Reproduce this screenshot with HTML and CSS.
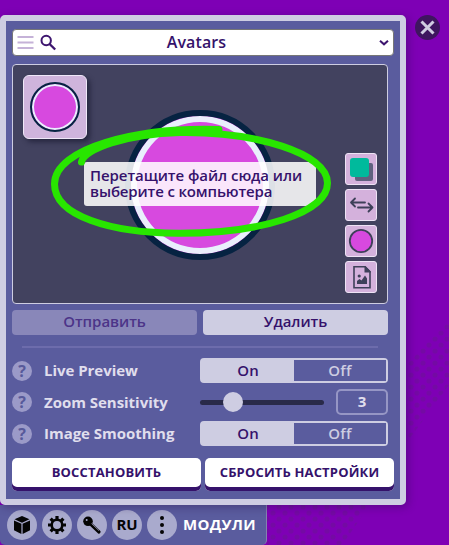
FILE: index.html
```html
<!DOCTYPE html>
<html lang="ru">
<head>
<meta charset="utf-8">
<title>Avatars</title>
<link rel="stylesheet" href="styles.css">
</head>
<body>
<svg class="texture" width="449" height="545" aria-hidden="true">
  <defs><pattern id="dots" width="12" height="12" patternUnits="userSpaceOnUse"><circle cx="3" cy="3" r="2.6"/><circle cx="9" cy="9" r="2.6"/></pattern></defs>
  <path d="M449 318L449 385L407 442V365Z" fill="url(#dots)"/>
  <path d="M267 505H370L342 545H267Z" fill="url(#dots)"/>
</svg>
<div class="workspace">
  <main class="panel">
    <div class="select">
      <svg width="50" height="25" viewBox="0 0 50 25"><path d="M4.500 7h16M4.500 12.500h16M4.500 18h16" stroke="#c5b2d8" stroke-width="2.2"/><circle cx="33.2" cy="10.5" r="4.7" fill="none" stroke="#3d156f" stroke-width="2"/><path d="M36.6 14l5.6 5.5" stroke="#3d156f" stroke-width="2.4"/></svg>
      <span class="select-text">Avatars</span>
      <svg class="chevron" width="10" height="8" viewBox="0 0 10 8"><path d="M1 1.7l4 3.6 4-3.6" fill="none" stroke="#3d156f" stroke-width="2"/></svg>
    </div>
    <section class="preview">
      <div class="thumb"><i class="disc small"></i></div>
      <i class="disc large"></i>
      <div class="hint"><div class="t-hint1">Перетащите файл сюда или</div><div class="t-hint2">выберите с компьютера</div></div>
      <div class="tools">
        <button><svg viewBox="0 0 30 30"><rect x="9" y="9" width="18" height="18" rx="2" fill="#60617f"/><rect x="4" y="4" width="19" height="19" rx="3" fill="#00ba9c"/></svg></button>
        <button><svg viewBox="0 0 30 30"><path d="M5 12.500h14M9 8.500l-4 4 4 4M12 17.500h14.500M22.500 13.500l4 4-4 4" fill="none" stroke="#3e4059" stroke-width="1.8" stroke-linecap="round" stroke-linejoin="round"/></svg></button>
        <button><svg viewBox="0 0 30 30"><circle cx="15" cy="15" r="11.2" fill="#d749df" stroke="#3e4059" stroke-width="1.8"/></svg></button>
        <button><svg viewBox="0 0 30 30"><path d="M8 4.800h11l5 5v16H8Z" fill="none" stroke="#3e4059" stroke-width="1.6"/><path d="M18.500 4h1l5.300 5.500v1h-6.300ZM11 22v-3l2.500-2 2 1.500 3.500-5 2 3V22Z" fill="#3e4059"/><circle cx="13.2" cy="14" r="1.6" fill="#3e4059"/></svg></button>
      </div>
      <svg class="scribble" width="290" height="120" viewBox="46 121 290 120"><path d="M219 129.500C137 127 54.500 148 54.500 184C54.500 216 111 233 178 233.200C260 233.500 327.500 213 327.500 183C327.500 153 255 131.500 180 132.500C126 134 84 149 81.500 162" fill="none" stroke="#28e600" stroke-width="7" stroke-linecap="round"/></svg>
    </section>
    <div class="actions"><button class="btn disabled"><span class="t-send">Отправить</span></button><button class="btn"><span class="t-del">Удалить</span></button></div>
    <hr>
    <div class="settings">
      <div class="row"><i class="help">?</i><label class="t-live">Live Preview</label><div class="toggle"><span>On</span><span class="off">Off</span></div></div>
      <div class="row"><i class="help">?</i><label class="t-zoom">Zoom Sensitivity</label><div class="range"><div class="track"><i class="knob"></i></div><span class="value">3</span></div></div>
      <div class="row"><i class="help">?</i><label class="t-image">Image Smoothing</label><div class="toggle"><span>On</span><span class="off">Off</span></div></div>
    </div>
    <div class="footer"><button><span class="t-restore">ВОССТАНОВИТЬ</span></button><button><span class="t-reset">СБРОСИТЬ НАСТРОЙКИ</span></button></div>
  </main>
  <button class="close"><svg width="25" height="25" viewBox="0 0 25 25"><path d="M6.500 6.500l12 12M18.500 6.500l-12 12" stroke="#d0cde2" stroke-width="3"/></svg></button>
</div>
<nav class="dock">
  <i><svg viewBox="0 0 30 30"><path d="M15 6l7.500 3.300L15 12.700 7.500 9.300ZM7 10.400l7.400 3.300v10.300L7 20.200ZM23 10.400l-7.400 3.300v10.300l7.400-3.800Z"/></svg></i>
  <i><svg viewBox="0 0 30 30"><circle cx="15" cy="15" r="5.300" fill="none" stroke="#050505" stroke-width="2.600"/><g stroke="#050505" stroke-width="3.200"><path d="M15 6v3.500M15 20.500V24M6 15h3.500M20.500 15H24M8.600 8.600l2.500 2.500M18.900 18.900l2.500 2.500M21.400 8.600l-2.500 2.500M11.100 18.900l-2.500 2.500"/></g></svg></i>
  <i><svg viewBox="0 0 30 30"><circle cx="11" cy="11.300" r="4.800"/><path d="M13 13.500l9 8.500" stroke="#050505" stroke-width="3.200" stroke-linecap="round"/><path d="M14.500 13.500l7.500 7.200" stroke="#a9aacd" stroke-width=".7"/><circle cx="9.700" cy="10" r="1" fill="#a9aacd"/></svg></i>
  <i class="lang"><span class="t-ru">RU</span></i>
  <i><svg viewBox="0 0 30 30"><circle cx="15" cy="8" r="2"/><circle cx="15" cy="15" r="2"/><circle cx="15" cy="22" r="2"/></svg></i>
  <strong class="t-mod">МОДУЛИ</strong>
</nav>
</body>
</html>
```
FILE: styles.css
```css
* { box-sizing: border-box; }
body { margin: 0; width: 449px; height: 545px; overflow: hidden; background: #7e00b5; font-family: "Open Sans", "Noto Sans", sans-serif; font-size: 16px; font-weight: 600; color: #35126b; padding-top: 15px; }
button { font: inherit; color: inherit; border: 0; padding: 0; }
svg { display: block; flex: none; }
span, label, .hint div { white-space: nowrap; }
.texture { position: absolute; inset: 0; fill: #740aa4; }
.workspace { display: flex; gap: 9px; align-items: flex-start; position: relative; z-index: 1; width: 449px; }
.panel { width: 406px; height: 490px; flex: none; border: 6px solid #cecde2; border-radius: 5px; background: #5a5c9e; padding: 8px 6px 0; box-shadow: 2px 2px 8px #28104866; }
.select { width: 382px; height: 27px; display: flex; align-items: center; background: #fff; border: 1px solid #777; border-radius: 4px; }
.select-text { flex: 1; text-align: center; padding-right: 49px; line-height: 25px; letter-spacing: .1px; }
.chevron { margin-right: 4px; }
.preview { margin-top: 8px; width: 376px; height: 240px; border: 1px solid #cecde2; border-radius: 4px; background: #42425f; position: relative; }
.thumb { position: absolute; left: 10px; top: 10px; width: 64px; height: 64px; border: 1px solid #efe8f8; border-radius: 6px; background: #cfb4dc; box-shadow: 3px 3px 5px #191a30aa; display: grid; place-items: center; }
.disc { display: block; border-radius: 50%; background: #d749df; }
.small { width: 50px; height: 50px; border: 2px solid #062342; box-shadow: inset 0 0 0 2px #e9effc; }
.large { position: absolute; left: 112px; top: 45px; width: 150px; height: 150px; border: 6px solid #062342; box-shadow: inset 0 0 0 6px #e9effc; }
.hint { position: absolute; left: 71px; top: 97px; width: 232px; height: 44px; border-radius: 3px; background: #ffffffdd; padding: 5px 6px; font-size: 15px; line-height: 16px; }
.t-hint1 { letter-spacing: -.06px; }
.t-hint2 { letter-spacing: -.14px; }
.tools { position: absolute; right: 10px; top: 88px; display: grid; gap: 4px; }
.tools button { width: 32px; height: 32px; border: 1px solid #eee3f5; border-radius: 3px; background: #d4b1dc; }
.scribble { position: absolute; left: 33px; top: 56px; }
.actions { width: 376px; display: grid; grid-template-columns: 1fr 1fr; gap: 6px; margin-top: 6px; }
.btn { height: 25px; border-radius: 4px; background: #cecde2; font-size: 15px; line-height: 23px; padding-bottom: 2px; letter-spacing: -.05px; }
.disabled { background: #8987b9; color: #4c3488; }
hr { width: 356px; height: 2px; margin: 11px 0 10px 10px; border: 0; background: #6d6cac; }
.settings { width: 376px; display: grid; grid-template-rows: 25px 26px 25px; gap: 6px; color: #e0deed; }
.row { display: grid; grid-template-columns: 20px 144px 188px; column-gap: 12px; align-items: center; font-weight: 700; font-size: 15px; letter-spacing: -.03px; }
.row label { padding-bottom: 1px; }
.help { width: 20px; height: 20px; border-radius: 50%; background: #9b9ac8; color: #57599a; font: 700 16px/20px "Open Sans"; text-align: center; }
.toggle { height: 25px; border: 2px solid #cecde2; border-radius: 4px; display: grid; grid-template-columns: 92px 1fr; text-align: center; line-height: 20px; font-size: 15px; font-weight: 600; }
.toggle span { background: #cecde2; color: #35126b; }
.toggle .off { background: #5a5c9e; color: #cecde2; letter-spacing: .3px; }
.range { display: flex; align-items: center; gap: 12px; }
.track { width: 124px; height: 5px; border-radius: 3px; background: #292a49; display: flex; align-items: center; }
.knob { width: 20px; height: 20px; border-radius: 50%; background: #cecde2; margin-left: 23px; }
.value { width: 52px; height: 26px; border: 2px solid #9696c5; border-radius: 5px; text-align: center; line-height: 21px; }
.footer { display: grid; grid-template-columns: 189px 189px; gap: 4px; margin-top: 12px; }
.footer button { height: 33px; padding-bottom: 6px; background: #fff; border-radius: 5px; box-shadow: inset 0 -4px #35126b; font-size: 13px; font-weight: 700; letter-spacing: .16px; }
.close { width: 25px; height: 25px; border-radius: 50%; background: #3e155f; }
.dock { width: 267px; height: 40px; background: #5a5c9e; border-right: 1px solid #8580b1; border-radius: 0 0 5px 5px; padding: 5px 0 5px 7px; display: flex; gap: 5px; align-items: center; }
.dock i { width: 30px; height: 30px; border-radius: 50%; background: #a9aacd; flex: none; fill: #050505; color: #050505; font: 700 15px/28px "Open Sans"; text-align: center; }
.dock strong { margin-left: 1px; padding-bottom: 2px; color: #fff; font-size: 15px; font-weight: 700; letter-spacing: .3px; }
```
